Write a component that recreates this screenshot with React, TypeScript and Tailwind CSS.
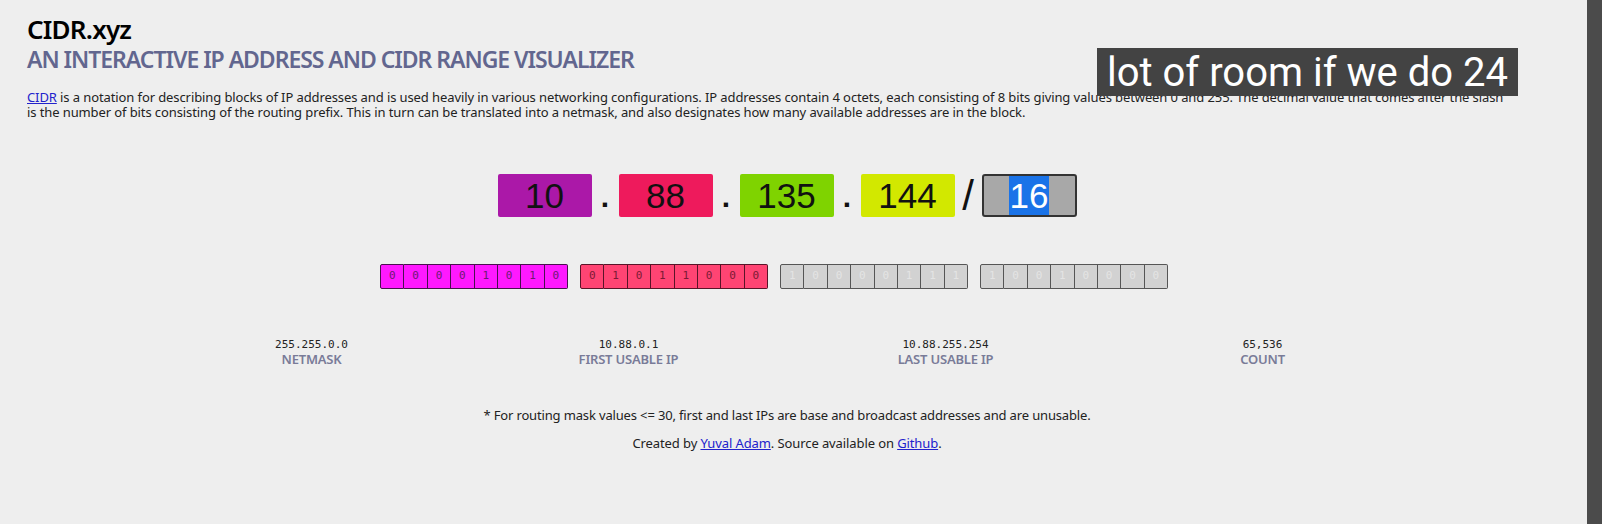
import React from 'react';

const sans = "font-['Noto_Sans',sans-serif]";

const octets = [
  { value: '10', bg: 'bg-[#ab18a8]' },
  { value: '88', bg: 'bg-[#ee1a5c]' },
  { value: '135', bg: 'bg-[#7fd300]' },
  { value: '144', bg: 'bg-[#d2e800]' },
];

const bitGroups = [
  { bits: '00001010', cell: 'bg-[#ff19ff] text-[#6b1a70] border-[#4a1050]' },
  { bits: '01011000', cell: 'bg-[#ff4473] text-[#7a1a34] border-[#5a1428]' },
  { bits: '10000111', cell: 'bg-[#d2d2d2] text-[#e4e4e4] border-[#555555]' },
  { bits: '10010000', cell: 'bg-[#d2d2d2] text-[#e4e4e4] border-[#555555]' },
];

const stats = [
  { value: '255.255.0.0', label: 'NETMASK' },
  { value: '10.88.0.1', label: 'FIRST USABLE IP' },
  { value: '10.88.255.254', label: 'LAST USABLE IP' },
  { value: '65,536', label: 'COUNT' },
];

export default function App() {
  return (
    <div className={`relative flex h-[524px] w-full overflow-hidden bg-[#eeeeee] text-[#222222] ${sans}`}>
      <main className="w-[1587px] shrink-0 px-[27px] pt-[15px]">
        {/* Header */}
        <h1 className="text-[26px] leading-[29px] font-semibold tracking-[-0.8px] text-black">CIDR.xyz</h1>
        <h2 className="text-[23px] leading-[30px] font-semibold tracking-[-1.04px] text-[#62668f]">
          AN INTERACTIVE IP ADDRESS AND CIDR RANGE VISUALIZER
        </h2>
        <p className="mt-[16px] w-[1480px] text-[13px] leading-[15px] tracking-[-0.1px]">
          <a href="#" className="text-[#2222cc] underline">CIDR</a> is a notation for describing blocks of IP addresses and is used heavily in various networking configurations. IP addresses contain 4 octets, each consisting of 8 bits giving values between 0 and 255. The decimal value that comes after the slash is the number of bits consisting of the routing prefix. This in turn can be translated into a netmask, and also designates how many available addresses are in the block.
        </p>

        <div className="w-[1520px]">
          {/* Address inputs */}
          <div className="mt-[54px] flex h-[43px] items-center justify-center font-['Liberation_Sans',sans-serif] text-[35px] leading-none text-[#111111]">
            {octets.map((o, i) => (
              <React.Fragment key={o.value}>
                <div className={`flex h-[43px] w-[94px] items-center justify-center rounded-[2px] pb-[1px] ${o.bg}`}>{o.value}</div>
                {i < 3 && <span className="flex h-[43px] w-[27px] items-end justify-center pb-[5px] text-[30px] font-bold">.</span>}
              </React.Fragment>
            ))}
            <span className="flex h-[43px] w-[27px] items-center justify-center text-[42px]">/</span>
            <div className="flex h-[43px] w-[95px] items-stretch justify-center rounded-[3px] border-2 border-[#333333] bg-[#a8a8a8]">
              <span className="flex w-[40px] items-center justify-center bg-[#1a73e8] pb-[1px] text-white">16</span>
            </div>
          </div>

          {/* Bits */}
          <div className="mt-[47px] flex justify-center gap-[12px] pr-[26px] font-['DejaVu_Sans_Mono',monospace] text-[11px]">
            {bitGroups.map((g) => (
              <div key={g.bits} className="flex h-[25px] w-[188px]">
                {g.bits.split('').map((b, i) => (
                  <div key={i} className={`flex flex-1 items-center justify-center border border-l-0 first:rounded-l-[2px] first:border-l last:rounded-r-[2px] ${g.cell}`}>{b}</div>
                ))}
              </div>
            ))}
          </div>

          {/* Stats */}
          <div className="mx-auto mt-[49px] grid w-[1268px] grid-cols-4 text-center">
            {stats.map((s) => (
              <div key={s.label}>
                <div className="font-['DejaVu_Sans_Mono',monospace] text-[11px] leading-[14px]">{s.value}</div>
                <div className="text-[13px] leading-[14px] font-semibold tracking-[-0.2px] text-[#797b98]">{s.label}</div>
              </div>
            ))}
          </div>

          {/* Footer */}
          <p className="mt-[40px] text-center text-[13px] leading-[18px] tracking-[-0.15px]">
            * For routing mask values &lt;= 30, first and last IPs are base and broadcast addresses and are unusable.
          </p>
          <p className="mt-[10px] text-center text-[13px] leading-[18px] tracking-[-0.1px]">
            Created by <a href="#" className="text-[#2222cc] underline">Yuval Adam</a>. Source available on <a href="#" className="text-[#2222cc] underline">Github</a>.
          </p>
        </div>
      </main>

      {/* Scrollbar */}
      <div className="w-[15px] shrink-0 bg-[#4b4b4b]" />

      {/* Video caption */}
      <div className="absolute left-[1097px] top-[48px] flex h-[48px] w-[421px] items-center justify-center bg-[#434343] pt-[2px] font-['Roboto',sans-serif] text-[40px] leading-none whitespace-nowrap text-white">
        lot of room if we do 24
      </div>
    </div>
  );
}
